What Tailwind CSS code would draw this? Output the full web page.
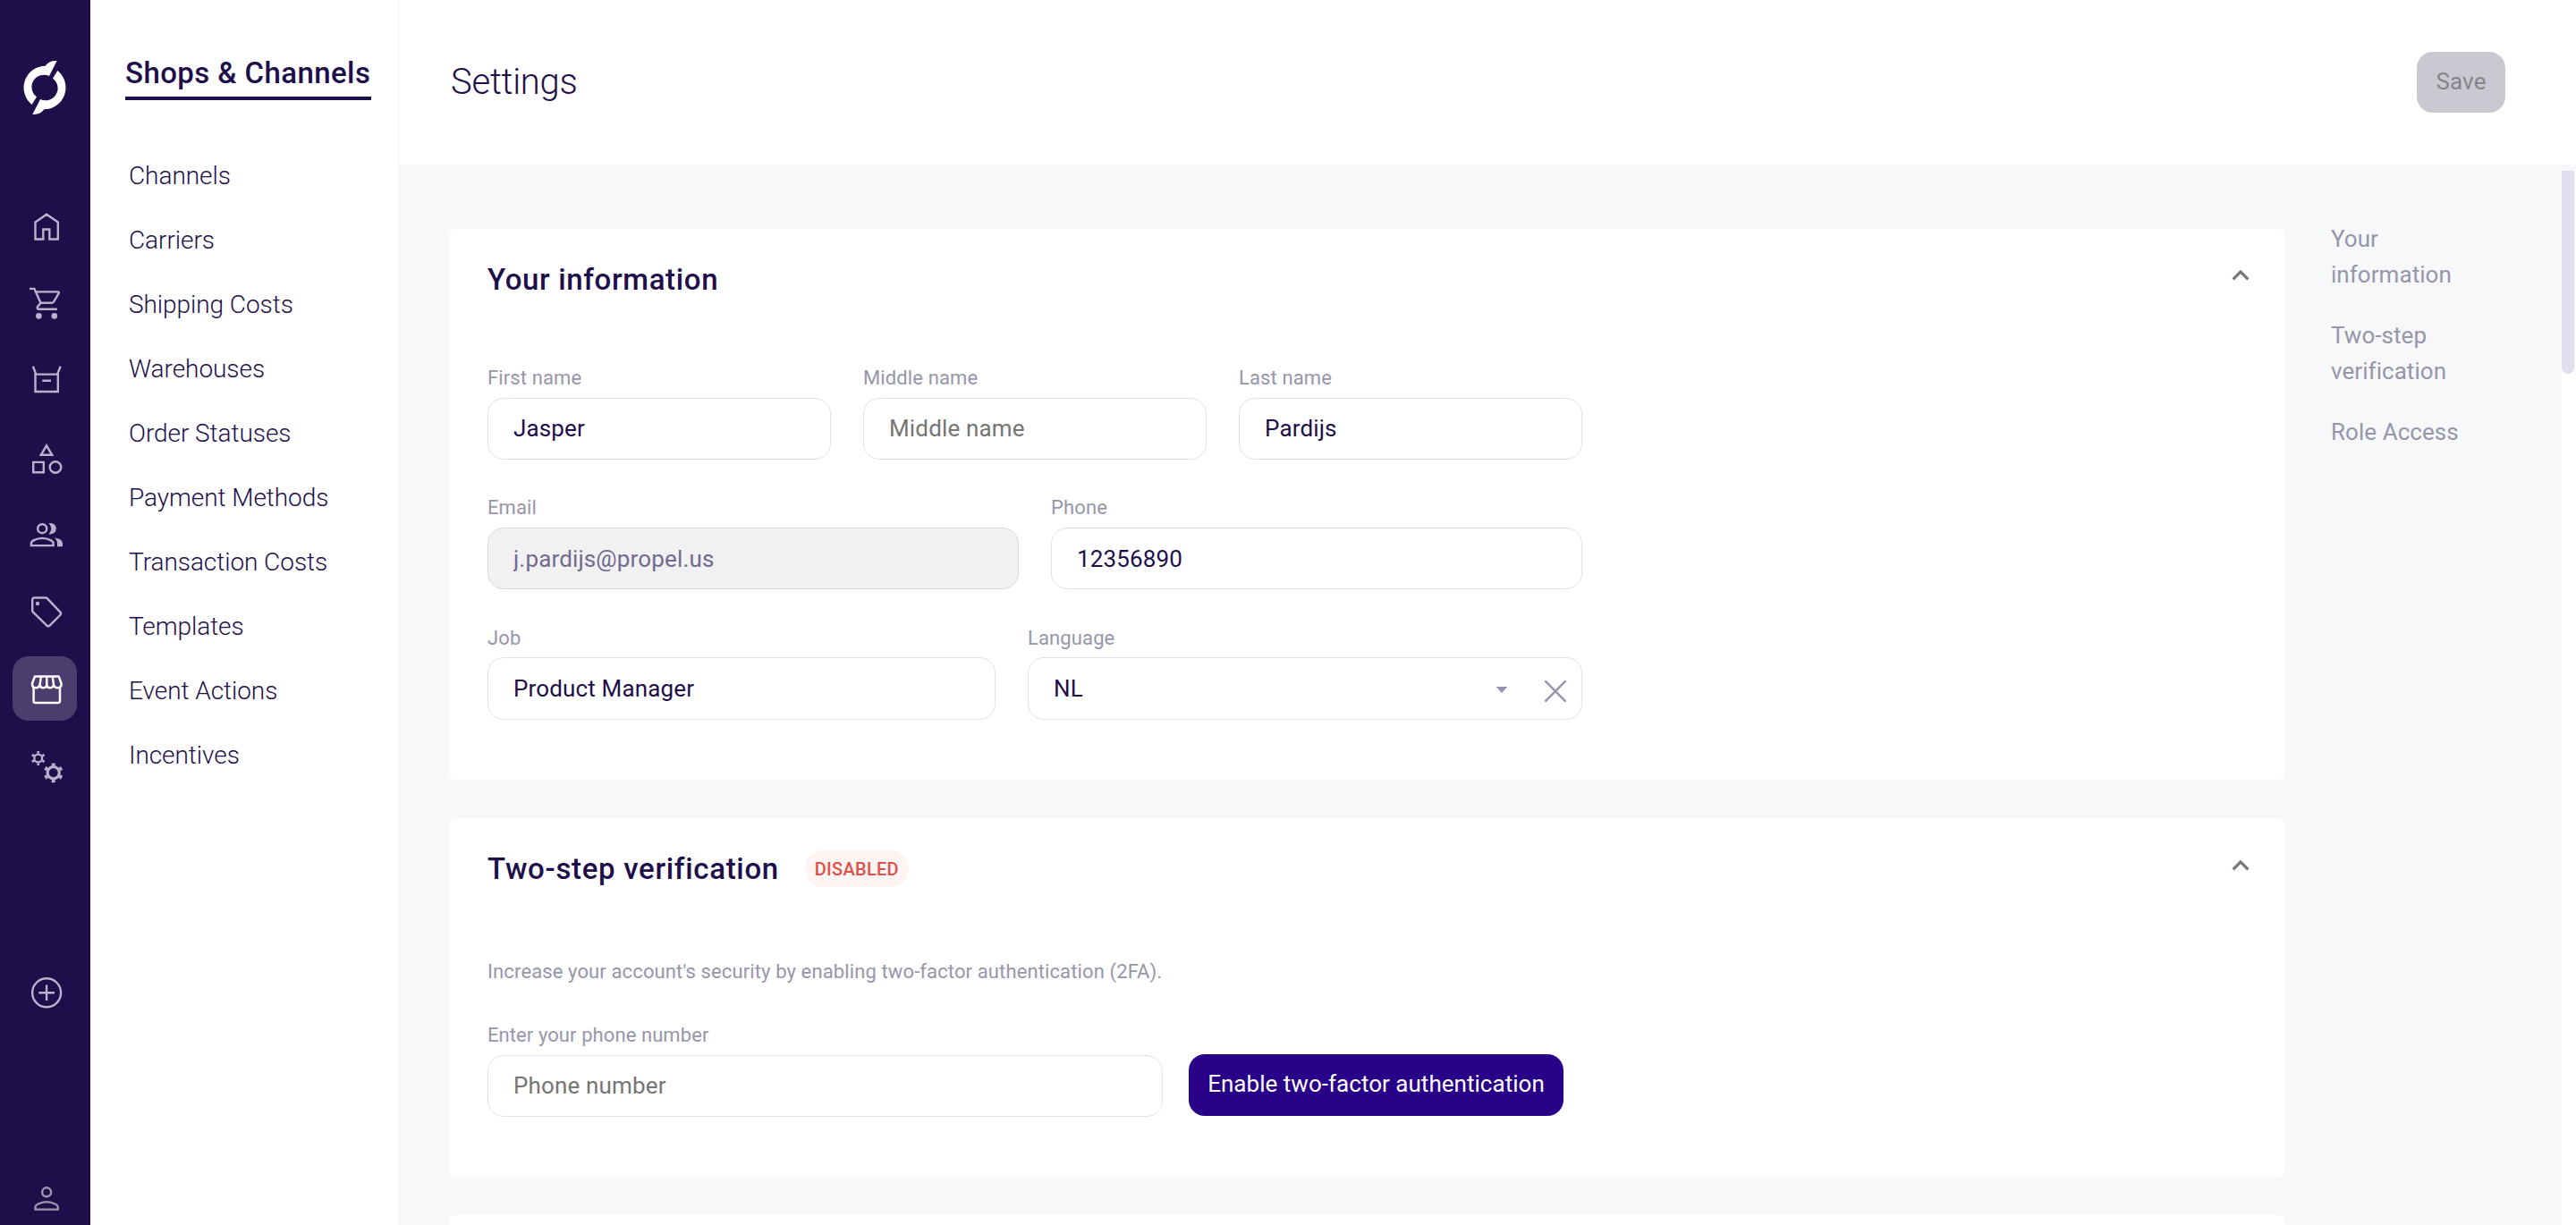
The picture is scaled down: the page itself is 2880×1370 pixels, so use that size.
<!DOCTYPE html>
<html lang="en">
<head>
    <meta charset="UTF-8">
    <meta name="viewport" content="width=device-width, initial-scale=1.0">
    <title>Settings</title>
    <script src="https://cdn.jsdelivr.net/npm/@tailwindcss/browser@4"></script>
</head>
<body class="flex h-screen overflow-hidden bg-white font-[Roboto,sans-serif] text-[26px] tracking-[0.15px] text-[#1e0f4b]">

    <!-- Icon rail -->
    <aside class="flex w-[101px] shrink-0 flex-col bg-[#1e0f4b] pt-[50px] text-[#b9b2cc]">
        <svg class="size-[100px] shrink-0 text-white" viewBox="0 0 300 300" fill="currentColor">
            <path d="M191 54Q165 52 152 71A73 73 0 0 0 107 201L123 175A41 41 0 0 1 165 105Z"/>
            <path transform="rotate(180 150 144)" d="M191 54Q165 52 152 71A73 73 0 0 0 107 201L123 175A41 41 0 0 1 165 105Z"/>
        </svg>

        <nav class="mt-[66px] ml-[14px] flex shrink-0 flex-col gap-[14.33px]">
            <!-- Home -->
            <a href="#" class="size-[72px]">
                <svg viewBox="0 0 72 72" fill="none" stroke="currentColor" stroke-width="2.4">
                    <path d="M25.5 32.5L38.1 23.8L50.8 32.5V51.5H41.3V40.5H34.3V51.5H25.5Z"/>
                </svg>
            </a>
            <!-- Orders -->
            <a href="#" class="size-[72px]">
                <svg viewBox="0 0 72 72" fill="none" stroke="currentColor" stroke-width="2.4">
                    <path d="M19 20.9h5.4l7.1 15.8h12.6q1.3 0 2-1.2l5.6-9.6q.7-1.5-1-1.5H26M31.5 36.7l-3.6 4.5q-.8 2.5 1.6 2.5h20.3"/>
                    <circle cx="29.4" cy="51.4" r="3.3" fill="currentColor" stroke="none"/>
                    <circle cx="46.8" cy="51.4" r="3.3" fill="currentColor" stroke="none"/>
                </svg>
            </a>
            <!-- Products -->
            <a href="#" class="size-[72px]">
                <svg viewBox="0 0 72 72" fill="none" stroke="currentColor" stroke-width="2.4">
                    <path d="M25.5 29.6H50.8V49H25.5ZM22.9 20.8L26.3 29.6M53.7 20.8L50 29.6M33.3 36.7H43"/>
                </svg>
            </a>
            <!-- Categories -->
            <a href="#" class="size-[72px]">
                <svg viewBox="0 0 72 72" fill="none" stroke="currentColor" stroke-width="2.4">
                    <path d="M38 23.4L44.3 33.8H31.8ZM23.2 41.9h11.6v11.3H23.2Z"/>
                    <circle cx="48" cy="47.5" r="6.3"/>
                </svg>
            </a>
            <!-- Customers -->
            <a href="#" class="size-[72px]">
                <svg viewBox="0 0 72 72" fill="none" stroke="currentColor" stroke-width="2.4">
                    <circle cx="33.2" cy="30.2" r="5"/>
                    <path d="M20.9 49.1V47q0-2.3 2.5-3.6Q28 40.9 33.2 40.9T43 43.4q2.6 1.3 2.6 3.6V49.1Z"/>
                    <path fill="currentColor" stroke="none" d="M40.5 36.2Q43.3 33.4 43.3 30.2T40.5 24.2Q41.5 23.9 42.6 23.9A6.2 6.2 0 0 1 42.6 36.4Q41.5 36.4 40.5 36.2ZM50 50.3v-3.6q0-3.9-3.2-6.3q4 .5 6.4 1.8q2.8 1.6 2.8 4.4V50.3z"/>
                </svg>
            </a>
            <!-- Promotions -->
            <a href="#" class="size-[72px]">
                <svg viewBox="0 0 72 72" fill="none" stroke="currentColor" stroke-width="2.4">
                    <path d="M24.5 20.5H37q1 0 1.7.7L53.4 36.6q1.4 1.6 0 3.2L41.5 51.7q-1.5 1.3-3.1 0L23 36.7q-.8-.8-.8-1.8V22.8q0-2.3 2.3-2.3z"/>
                    <circle cx="28" cy="27" r="2.2" fill="currentColor" stroke="none"/>
                </svg>
            </a>
            <!-- Shops & Channels -->
            <a href="#" class="size-[72px] rounded-[18px] bg-[#4b3e6f] text-white">
                <svg viewBox="0 0 72 72" fill="none" stroke="currentColor" stroke-width="2.5" stroke-linejoin="round">
                    <path d="M24.9 22.6L22.1 30.2q-.6 5 4 5q3.8 0 4.6-4q0 4 3.7 4t3.9-4q0 4 3.9 4t3.7-4q.8 4 4.6 4q4.6 0 4-5L51.7 22.6Z"/>
                    <path d="M31.9 22.6L30.7 31.2M38.3 22.6V31.2M44.7 22.6L45.9 31.2M23.6 35V50q0 1.9 1.9 1.9H51.1q1.9 0 1.9-1.9V35"/>
                </svg>
            </a>
            <!-- Configuration -->
            <a href="#" class="size-[72px]">
                <svg viewBox="0 0 72 72" fill="none" stroke="currentColor">
                    <circle cx="28.7" cy="28" r="4.4" stroke-width="2.3"/>
                    <circle cx="28.7" cy="28" r="6.6" stroke-width="2.6" pathLength="60" stroke-dasharray="4 6" stroke-dashoffset="-3"/>
                    <circle cx="45.7" cy="44.3" r="6.6" stroke-width="3.2"/>
                    <circle cx="45.7" cy="44.3" r="9.3" stroke-width="3.2" pathLength="60" stroke-dasharray="4.2 5.8" stroke-dashoffset="-2.9"/>
                </svg>
            </a>
        </nav>

        <div class="mt-[182px] ml-[14px] flex shrink-0 flex-col gap-[154px]">
            <!-- Add -->
            <a href="#" class="size-[72px]">
                <svg viewBox="0 0 72 72" fill="none" stroke="currentColor" stroke-width="2.4">
                    <circle cx="38.1" cy="36.3" r="16"/>
                    <path d="M29.3 36.3H47M38.1 27.6V45"/>
                </svg>
            </a>
            <!-- Account -->
            <a href="#" class="size-[72px] text-[#9a96aa]">
                <svg viewBox="0 0 72 72" fill="none" stroke="currentColor" stroke-width="2.4">
                    <circle cx="38.1" cy="33.3" r="5"/>
                    <path d="M25.5 52.6V50.3q0-2.2 2.6-3.5Q32.6 44.1 38.1 44.1T48.2 46.8q2.6 1.3 2.6 3.5V52.6Z"/>
                </svg>
            </a>
        </div>
    </aside>

    <!-- Section menu -->
    <nav class="w-[345px] shrink-0 border-r border-[#f6f7fa] pt-[58px]">
        <h2 class="ml-[39px] w-[275px] border-b-4 border-[#1e0f4b] pb-[2px] text-[33px] leading-[48px] font-medium tracking-[0.42px] whitespace-nowrap">Shops &amp; Channels</h2>
        <ul class="mt-[49px] ml-[43px] text-[28px] leading-[72px] font-light tracking-[-0.06px]">
            <li>Channels</li>
            <li>Carriers</li>
            <li>Shipping Costs</li>
            <li>Warehouses</li>
            <li>Order Statuses</li>
            <li>Payment Methods</li>
            <li>Transaction Costs</li>
            <li>Templates</li>
            <li>Event Actions</li>
            <li>Incentives</li>
        </ul>
    </nav>

    <div class="flex min-w-0 grow flex-col">
        <header class="flex h-[184px] shrink-0 items-center justify-between pr-[79px] pl-[58px]">
            <h1 class="text-[40px] font-light tracking-[-0.25px]">Settings</h1>
            <button class="h-[68px] w-[99px] rounded-[18px] bg-[#cac9d2] pb-[2px] text-[#858589]">Save</button>
        </header>

        <div class="flex min-h-0 grow bg-[#f6f8fa]">
            <main class="flex w-[2109px] shrink-0 flex-col gap-[43px] overflow-hidden pt-[72px] pl-[56px]">

                <!-- Your information -->
                <section class="h-[616px] w-[2053px] shrink-0 rounded-lg bg-white pr-[31px] pl-[43px]">
                    <div class="flex h-[145px] items-start justify-between">
                        <h3 class="pt-[32px] text-[33px] leading-[49px] font-medium tracking-[0.64px]">Your information</h3>
                        <svg class="mt-[33px] size-[38px] text-[#757575]" viewBox="0 0 24 24" fill="currentColor"><path d="M12 8l-6 6 1.41 1.41L12 10.83l4.59 4.58L18 14z"/></svg>
                    </div>
                    <div class="flex w-[1224px] flex-col gap-8">
                        <div class="grid grid-cols-3 gap-9">
                            <div>
                                <label class="block text-[22px] leading-[44px] tracking-[0.12px] text-[#9795aa]">First name</label>
                                <input type="text" value="Jasper" class="h-[69px] w-full rounded-[18px] border border-[#e2dff0] px-7 pb-px">
                            </div>
                            <div>
                                <label class="block text-[22px] leading-[44px] tracking-[0.12px] text-[#9795aa]">Middle name</label>
                                <input type="text" placeholder="Middle name" class="h-[69px] w-full rounded-[18px] border border-[#e2dff0] px-7 pb-px placeholder:text-[#757575]">
                            </div>
                            <div>
                                <label class="block text-[22px] leading-[44px] tracking-[0.12px] text-[#9795aa]">Last name</label>
                                <input type="text" value="Pardijs" class="h-[69px] w-full rounded-[18px] border border-[#e2dff0] px-7 pb-px">
                            </div>
                        </div>
                        <div class="grid grid-cols-2 gap-9">
                            <div>
                                <label class="block text-[22px] leading-[44px] tracking-[0.12px] text-[#9795aa]">Email</label>
                                <input type="text" value="j.pardijs@propel.us" disabled class="h-[69px] w-full rounded-[18px] border border-[#d9d9db] bg-[#f1f1f1] px-7 text-[#716a90]">
                            </div>
                            <div>
                                <label class="block text-[22px] leading-[44px] tracking-[0.12px] text-[#9795aa]">Phone</label>
                                <input type="text" value="12356890" class="h-[69px] w-full rounded-[18px] border border-[#e2dff0] px-7">
                            </div>
                        </div>
                        <div class="flex gap-9">
                            <div class="w-[568px]">
                                <label class="block pt-[2px] text-[22px] leading-[42px] tracking-[0.12px] text-[#9795aa]">Job</label>
                                <input type="text" value="Product Manager" class="h-[70px] w-full rounded-[18px] border border-[#e2dff0] px-7">
                            </div>
                            <div class="w-[620px]">
                                <label class="block pt-[2px] text-[22px] leading-[42px] tracking-[0.12px] text-[#9795aa]">Language</label>
                                <div class="flex h-[70px] items-center rounded-[18px] border border-[#e2dff0] pr-4 pl-7">
                                    <span class="grow">NL</span>
                                    <svg class="mt-[3px] mr-[40px] h-[7px] w-[14px] text-[#9795aa]" viewBox="0 0 14 7" fill="currentColor"><path d="M.6 0h12.8L7 7z"/></svg>
                                    <svg class="mt-[6px] size-[26px] text-[#9795aa]" viewBox="0 0 26 26" fill="none" stroke="currentColor" stroke-width="2.5" stroke-linecap="round"><path d="M2.2 2.2L23.8 23.8M23.8 2.2L2.2 23.8"/></svg>
                                </div>
                            </div>
                        </div>
                    </div>
                </section>

                <!-- Two-step verification -->
                <section class="h-[401px] w-[2053px] shrink-0 rounded-lg bg-white pr-[31px] pl-[43px]">
                    <div class="flex h-[152px] items-start justify-between">
                        <div class="flex items-center gap-[29px] pt-[32px]">
                            <h3 class="text-[33px] leading-[49px] font-medium tracking-[0.68px]">Two-step verification</h3>
                            <span class="flex h-[41px] w-[116px] items-center justify-center rounded-full bg-[#fef4f3] text-[20px] font-medium tracking-[0.3px] text-[#de5148]">DISABLED</span>
                        </div>
                        <svg class="mt-[34px] size-[38px] text-[#757575]" viewBox="0 0 24 24" fill="currentColor"><path d="M12 8l-6 6 1.41 1.41L12 10.83l4.59 4.58L18 14z"/></svg>
                    </div>
                    <p class="text-[22px] leading-[40px] tracking-[0.12px] text-[#9795aa]">Increase your account's security by enabling two-factor authentication (2FA).</p>
                    <div class="mt-[29px] flex items-end gap-[29px]">
                        <div class="w-[755px]">
                            <label class="block text-[22px] leading-[44px] tracking-[0.08px] text-[#9795aa]">Enter your phone number</label>
                            <input type="text" placeholder="Phone number" class="h-[69px] w-full rounded-[18px] border border-[#e2dff0] px-7 pb-px placeholder:text-[#757575]">
                        </div>
                        <button class="mb-px h-[69px] w-[419px] rounded-[18px] bg-[#290088] pb-[2px] tracking-[0.03px] text-white">Enable two-factor authentication</button>
                    </div>
                </section>

                <!-- Role Access -->
                <section class="h-[401px] w-[2053px] shrink-0 rounded-lg bg-white"></section>
            </main>

            <!-- On-page links -->
            <nav class="grow pt-[63px] pl-[51px] leading-[40px] tracking-[0.05px] text-[#9795aa]">
                <ul class="flex w-[160px] flex-col gap-7">
                    <li>Your information</li>
                    <li>Two-step verification</li>
                    <li>Role Access</li>
                </ul>
            </nav>

            <!-- Scrollbar -->
            <div class="mt-[7px] w-4 shrink-0 bg-white">
                <div class="h-[227px] w-[14px] rounded-b-full bg-[#e2ddef]"></div>
            </div>
        </div>
    </div>

</body>
</html>
